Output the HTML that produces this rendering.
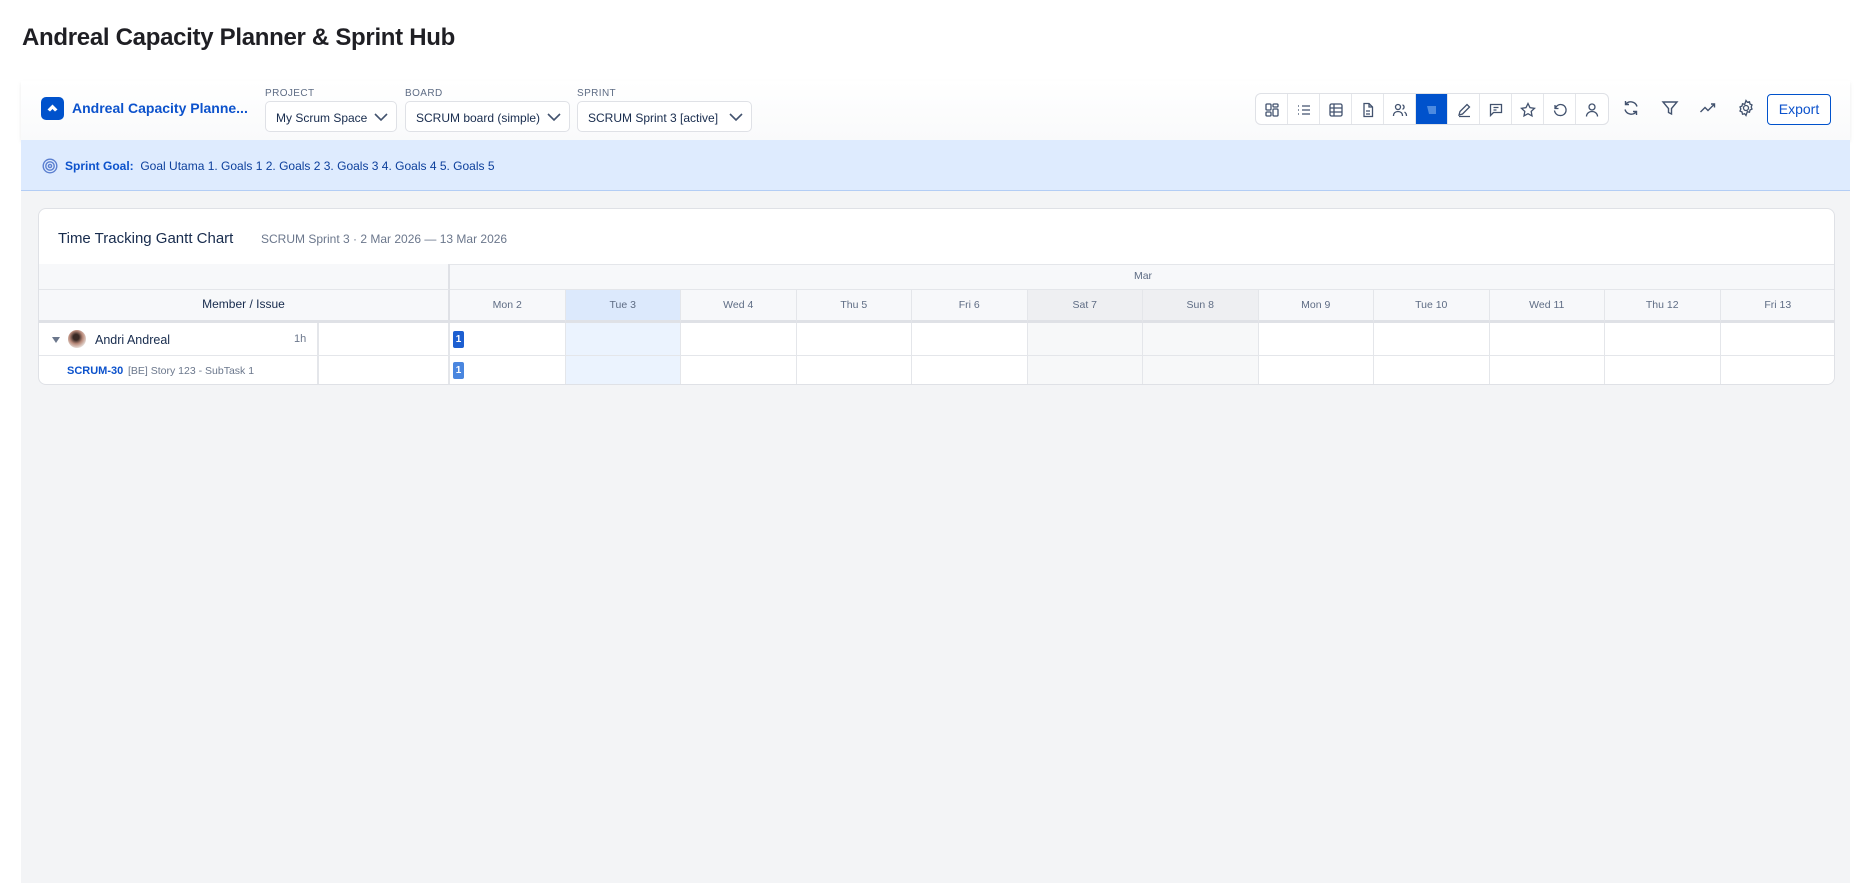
<!DOCTYPE html>
<html><head><meta charset="utf-8"><style>
*{box-sizing:border-box;margin:0;padding:0}
body{width:1862px;height:883px;background:#fff;font-family:"Liberation Sans",Arial,sans-serif;position:relative;overflow:hidden;color:#172b4d}
.abs{position:absolute}
h1{position:absolute;left:22px;top:24px;font-size:24px;font-weight:bold;color:#1f1f24;letter-spacing:-0.3px}
.main{position:absolute;left:21px;top:81px;width:1829px;height:802px;background:#f3f4f6}
.top{position:absolute;left:0;top:0;width:1829px;height:59px;background:linear-gradient(#fff,#f9fafb);box-shadow:0 2px 4px rgba(0,0,0,.08)}
.goal{position:absolute;left:0;top:59px;width:1829px;height:51px;background:#deebfe;border-bottom:1px solid #b3cdf5}
.lbl{position:absolute;font-size:10px;color:#5e6c84;letter-spacing:.4px}
.dd{position:absolute;top:20px;height:31px;border:1px solid #dfe1e6;border-radius:5px;background:#fff;font-size:12px;color:#172b4d;padding:9px 0 0 10px}
.dd svg{position:absolute;right:8px;top:10px}
.grp{position:absolute;left:1234px;top:12px;height:32px;border:1px solid #dfe1e6;border-radius:6px;background:#fff;display:flex;overflow:hidden}
.grp div{width:32px;height:32px;border-right:1px solid #e4e6ea;display:flex;align-items:center;justify-content:center}
.grp div:last-child{border-right:0}
.grp div.on{background:#0052cc}
.ic{position:absolute;top:18px}
.card{position:absolute;left:17px;top:127px;width:1797px;height:177px;background:#fff;border:1px solid #dfe1e6;border-radius:8px;overflow:hidden}
.cell{position:absolute;border-right:1px solid #e4e6ea;border-bottom:1px solid #e4e6ea}
.dh{font-size:10.5px;color:#5e6c84;text-align:center;line-height:31px}
.bar{position:absolute;width:11px;height:17px;border-radius:2px;color:#fff;font-size:10px;font-weight:bold;text-align:center;line-height:17px}
</style></head><body>
<h1>Andreal Capacity Planner &amp; Sprint Hub</h1>
<div class="main">
 <div class="top">
  <div class="abs" style="left:20px;top:16px;width:23px;height:23px;background:#0052cc;border-radius:5px"><svg width="23" height="23" viewBox="0 0 23 23"><path d="M6.5 12.5 L11.5 7.5 L16.5 12.5 L14 14.5 L11.5 12 L9 14.5Z" fill="#fff"/></svg></div>
  <div class="abs" style="left:51px;top:19px;font-size:14px;font-weight:bold;color:#0c52cc">Andreal Capacity Planne...</div>
  <div class="lbl" style="left:244px;top:7px">PROJECT</div>
  <div class="lbl" style="left:384px;top:7px">BOARD</div>
  <div class="lbl" style="left:556px;top:7px">SPRINT</div>
  <div class="dd" style="left:244px;width:132px">My Scrum Space<svg width="14" height="10"><path d="M1 2l6 6 6-6" stroke="#42526e" stroke-width="1.6" fill="none"/></svg></div>
  <div class="dd" style="left:384px;width:165px">SCRUM board (simple)<svg width="14" height="10"><path d="M1 2l6 6 6-6" stroke="#42526e" stroke-width="1.6" fill="none"/></svg></div>
  <div class="dd" style="left:556px;width:175px">SCRUM Sprint 3 [active]<svg width="14" height="10"><path d="M1 2l6 6 6-6" stroke="#42526e" stroke-width="1.6" fill="none"/></svg></div>
  <div class="grp">
   <div><svg width="16" height="16" fill="none" stroke="#42526e" stroke-width="1.3"><rect x="2" y="2" width="5" height="6" rx="1"/><rect x="9" y="2" width="5" height="3" rx="1"/><rect x="2" y="10" width="5" height="4" rx="1"/><rect x="9" y="7" width="5" height="7" rx="1"/></svg></div>
   <div><svg width="16" height="16" fill="none" stroke="#42526e" stroke-width="1.3"><path d="M2 4h1M2 8h1M2 12h1M6 4h8M6 8h8M6 12h8"/></svg></div>
   <div><svg width="16" height="16" fill="none" stroke="#42526e" stroke-width="1.3"><rect x="2" y="2" width="12" height="12" rx="1.5"/><path d="M2 6h12M2 10h12M6 2v12"/></svg></div>
   <div><svg width="16" height="16" fill="none" stroke="#42526e" stroke-width="1.3"><path d="M4 1.5h5l3.5 3.5v9.5h-8.5z M9 1.5v3.5h3.5 M6 9h4M6 12h4"/></svg></div>
   <div><svg width="16" height="16" fill="none" stroke="#42526e" stroke-width="1.3"><circle cx="6" cy="5" r="2.5"/><path d="M1.5 14c0-3 2-4.5 4.5-4.5s4.5 1.5 4.5 4.5M10.5 2.8a2.4 2.4 0 010 4.5M12.5 10c1.3.8 2 2 2 4"/></svg></div>
   <div class="on"><svg width="16" height="16"><path d="M3 4h9v8H5z" fill="#4c8ae0"/></svg></div>
   <div><svg width="16" height="16" fill="none" stroke="#42526e" stroke-width="1.3"><path d="M3 13l1-3.5 7-7 2.5 2.5-7 7zM3 14.5h11"/></svg></div>
   <div><svg width="16" height="16" fill="none" stroke="#42526e" stroke-width="1.3"><path d="M2.5 2.5h11v8h-8l-3 3z M5.5 5.5h5M5.5 8h3"/></svg></div>
   <div><svg width="16" height="16" fill="none" stroke="#42526e" stroke-width="1.3"><path d="M8 1.5l2 4.2 4.5.6-3.3 3.1.8 4.5L8 11.7l-4 2.2.8-4.5L1.5 6.3l4.5-.6z"/></svg></div>
   <div><svg width="16" height="16" fill="none" stroke="#42526e" stroke-width="1.3"><path d="M3 3v3.5h3.5M3.5 6A5.5 5.5 0 118 13.5 5.5 5.5 0 012.5 8.5"/></svg></div>
   <div><svg width="16" height="16" fill="none" stroke="#42526e" stroke-width="1.3"><circle cx="8" cy="5" r="3"/><path d="M2.5 14.5c0-3 2.5-5 5.5-5s5.5 2 5.5 5"/></svg></div>
  </div>
  <svg class="ic" style="left:1601px" width="18" height="18" fill="none" stroke="#42526e" stroke-width="1.4"><path d="M15 7.5A6.5 6.5 0 003.5 5.5M3 10.5a6.5 6.5 0 0011.5 2M3.5 2v3.5H7M14.5 16v-3.5H11"/></svg>
  <svg class="ic" style="left:1640px" width="18" height="18" fill="none" stroke="#42526e" stroke-width="1.4"><path d="M2 3h14l-5.5 6.5V15l-3-1.5v-4z"/></svg>
  <svg class="ic" style="left:1678px" width="18" height="18" fill="none" stroke="#42526e" stroke-width="1.4"><path d="M1.5 13l4.5-4.5 3 3L15.5 5M12 5h3.5v3.5"/></svg>
  <svg class="ic" style="left:1716px" width="18" height="18" fill="none" stroke="#42526e" stroke-width="1.3"><circle cx="9" cy="9" r="2.5"/><path d="M9 1.5l1.3 1.8 2.2-.5.5 2.2 2 1-.8 2 .8 2-2 1-.5 2.2-2.2-.5L9 16.5l-1.3-1.8-2.2.5-.5-2.2-2-1 .8-2-.8-2 2-1 .5-2.2 2.2.5z"/></svg>
  <div class="abs" style="left:1746px;top:13px;width:64px;height:31px;border:1.5px solid #0052cc;border-radius:4px;background:#fff;color:#0c52cc;font-size:14px;text-align:center;line-height:28px">Export</div>
 </div>
 <div class="goal">
  <svg class="abs" style="left:21px;top:18px" width="16" height="16" fill="none" stroke="#5b7fd0" stroke-width="1.4"><circle cx="8" cy="8" r="6.8"/><circle cx="8" cy="8" r="4.2"/><circle cx="8" cy="8" r="1.6"/></svg>
  <div class="abs" style="left:44px;top:19px;font-size:12px;color:#0c3f9c"><b style="color:#0c52cc">Sprint Goal:</b>&nbsp; Goal Utama 1. Goals 1 2. Goals 2 3. Goals 3 4. Goals 4 5. Goals 5</div>
 </div>
 <div class="card">
  <div class="abs" style="left:19px;top:21px;font-size:15px;color:#172b4d">Time Tracking Gantt Chart</div>
  <div class="abs" style="left:222px;top:23px;font-size:12px;color:#6b778c">SCRUM Sprint 3 · 2 Mar 2026 — 13 Mar 2026</div>
  <div class="abs" style="left:0;top:55px;width:1797px;height:59px;background:#f7f8fa;border-top:1px solid #e4e6ea"></div>
  <div class="cell" style="left:0;top:55px;width:411px;height:26px;background:#f7f8fa;border-right:2px solid #dfe1e6"></div>
  <div class="cell dh" style="left:411px;top:55px;width:1386px;height:26px;line-height:25px;border-right:0">Mar</div>
  <div class="cell" style="left:0;top:81px;width:411px;height:33px;border-right:2px solid #dfe1e6;border-bottom:3px solid #dfe1e6;font-size:12px;text-align:center;line-height:29px;color:#172b4d">Member / Issue</div>
  <div id="days"></div>
  <div class="cell" style="left:0;top:114px;width:280px;height:33px;border-right:2px solid #e4e6ea"></div>
  <div class="cell" style="left:280px;top:114px;width:131px;height:33px;border-right:2px solid #e4e6ea"></div>
  <div class="cell" style="left:0;top:147px;width:280px;height:30px;border-right:2px solid #e4e6ea;border-bottom:0"></div>
  <div class="cell" style="left:280px;top:147px;width:131px;height:30px;border-right:2px solid #e4e6ea;border-bottom:0"></div>
  <svg class="abs" style="left:13px;top:127px" width="8" height="8"><path d="M0 1h8L4 7z" fill="#6b778c"/></svg>
  <div class="abs" style="left:29px;top:121px;width:18px;height:18px;border-radius:50%;background:radial-gradient(circle at 45% 40%,#3a2a25 20%,#b98a7a 45%,#e9e1dc 75%)"></div>
  <div class="abs" style="left:56px;top:124px;font-size:12.5px;color:#172b4d">Andri Andreal</div>
  <div class="abs" style="left:255px;top:124px;font-size:11px;color:#6b778c">1h</div>
  <div class="abs" style="left:28px;top:156px;font-size:11px;color:#0c52cc;font-weight:bold">SCRUM-30</div>
  <div class="abs" style="left:89px;top:156px;font-size:10.5px;color:#6b778c">[BE] Story 123 - SubTask 1</div>
  <div class="bar" style="left:414px;top:122px;background:#1d5fd1">1</div>
  <div class="bar" style="left:414px;top:153px;background:#4a86df">1</div>
 </div>
</div>
<script>
var d=["Mon 2","Tue 3","Wed 4","Thu 5","Fri 6","Sat 7","Sun 8","Mon 9","Tue 10","Wed 11","Thu 12","Fri 13"],h="",w=115.5;
for(var i=0;i<12;i++){var x=411+i*w,hb="#f7f8fa",bb="#fff";if(i==1){hb="#dce9fc";bb="#ebf3fe"}if(i==5||i==6){hb="#eeeff2";bb="#f7f8f9"}
h+='<div class="cell dh" style="left:'+x+'px;top:81px;width:'+w+'px;height:33px;background:'+hb+';border-bottom:3px solid #dfe1e6">'+d[i]+'</div>';
h+='<div class="cell" style="left:'+x+'px;top:114px;width:'+w+'px;height:33px;background:'+bb+'"></div>';
h+='<div class="cell" style="left:'+x+'px;top:147px;width:'+w+'px;height:30px;background:'+bb+';border-bottom:0'+(i==11?';border-right:0':'')+'"></div>';}
document.getElementById("days").outerHTML=h;
</script>
</body></html>
